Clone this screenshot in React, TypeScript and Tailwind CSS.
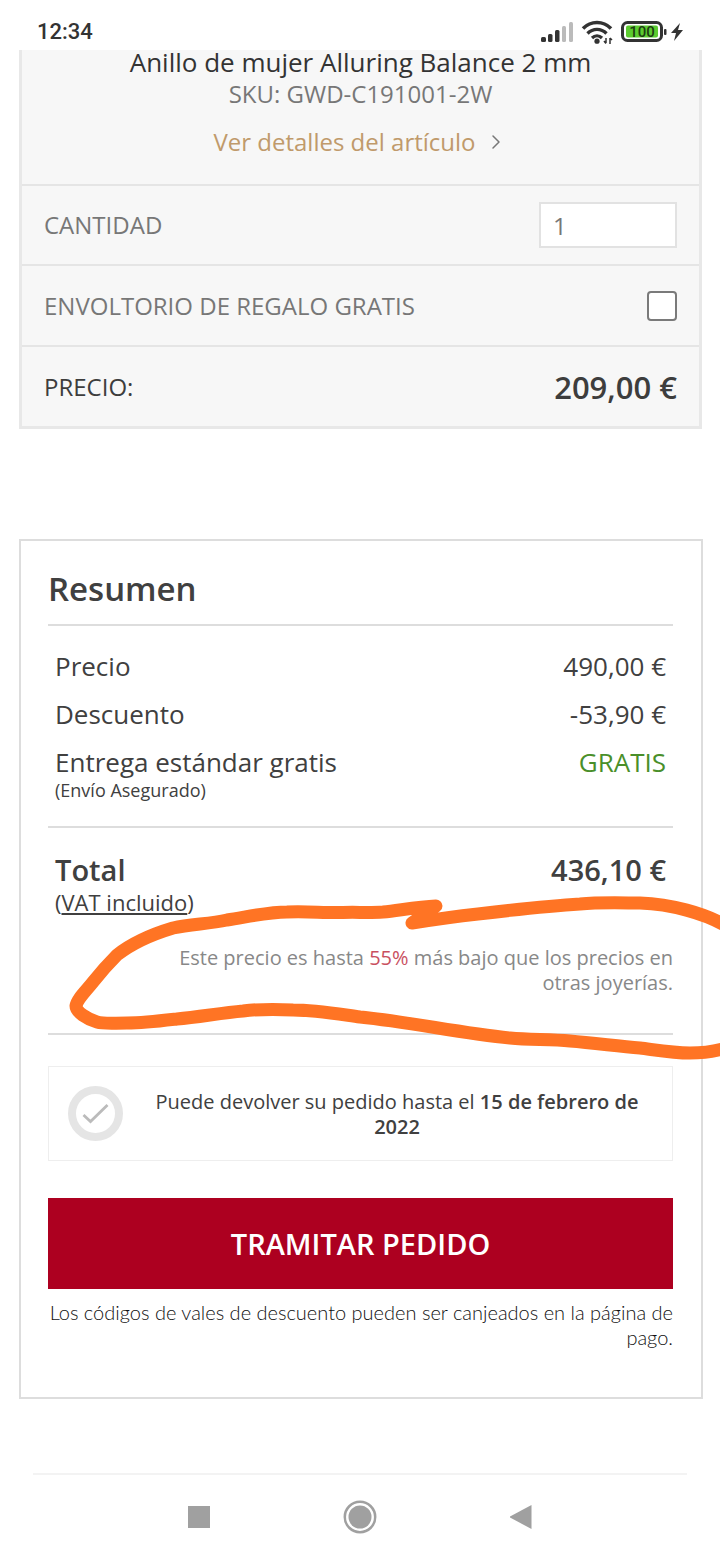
import { ChevronRight } from "lucide-react";

function StatusBar() {
  return (
    <header className="flex h-[50px] items-center justify-between pt-[14px] pr-[37px] pl-[37px] font-['Roboto',sans-serif] text-[#333]">
      <span className="text-[22px] leading-7 font-medium">12:34</span>
      <div className="flex items-center gap-2">
        {/* Signal */}
        <svg className="h-5 w-8" viewBox="0 0 32 20" aria-hidden="true">
          <rect x="0" y="15" width="5" height="5" rx="1.500" fill="#333" />
          <rect x="7" y="12" width="4.500" height="8" rx="1.500" fill="#333" />
          <rect x="14" y="8" width="4.500" height="12" rx="1.500" fill="#333" />
          <rect x="21" y="4" width="4" height="16" rx="1.500" fill="#bbb" />
          <rect x="28" y="0" width="4" height="20" rx="1.500" fill="#bbb" />
        </svg>
        {/* Wi-Fi */}
        <svg className="h-6 w-8" viewBox="0 0 32 24" fill="none" aria-hidden="true">
          <path d="M2 8.500C10 .5 22 .5 30 8.500" stroke="#333" strokeWidth="3.600" />
          <path d="M6.500 13.500C12 8 20 8 25.500 13.500" stroke="#333" strokeWidth="3.400" />
          <path d="M11 18c3-3 7-3 10 0" stroke="#333" strokeWidth="3.200" />
          <circle cx="16" cy="21.200" r="2.600" fill="#333" />
          <path d="M25 18v5m-2-2 2 2.500M29 24v-6m2 2-2-2" stroke="#333" strokeWidth="1.500" />
        </svg>
        {/* Battery */}
        <svg className="h-[22px] w-[46px]" viewBox="0 0 46 22" aria-hidden="true">
          <rect x="1.500" y="1.500" width="39" height="18" rx="5" fill="#fff" stroke="#333" strokeWidth="3" />
          <rect x="5" y="4.500" width="32" height="12" rx="2" fill="#5ccb2f" />
          <rect x="43" y="8" width="2.500" height="6" rx="1" fill="#333" />
          <text x="21" y="16" textAnchor="middle" fontSize="15" fontWeight="500" fill="#1d3d12">
            100
          </text>
        </svg>
        <svg className="-ml-1 h-5 w-3" viewBox="0 0 12 20" fill="#333" aria-hidden="true">
          <path d="M9 1 0 11h5L3 19l9-11H7z" />
        </svg>
      </div>
    </header>
  );
}

function ProductCard() {
  return (
    <section className="mr-[18px] ml-[19px] border-x-[3px] border-b-[3px] border-[#e8e8e8] bg-[#f7f7f7] text-2xl">
      <div className="flex flex-col items-center pb-[26px]">
        <h2 className="text-[26px] leading-6 text-[#333]">Anillo de mujer Alluring Balance 2 mm</h2>
        <p className="mt-1 leading-8 text-[#777]">SKU: GWD-C191001-2W</p>
        <a href="#detalles" className="mt-4 flex items-center gap-2 leading-8 text-[#c09a6b]">
          Ver detalles del artículo
          <ChevronRight className="size-6 text-[#777]" strokeWidth={1.5} />
        </a>
      </div>

      <div className="flex h-20 items-center justify-between border-t-2 border-[#e5e5e5] px-[22px] text-[#777]">
        <label htmlFor="cantidad">CANTIDAD</label>
        <input
          id="cantidad"
          type="text"
          defaultValue="1"
          className="h-[46px] w-[138px] border-2 border-[#e2e2e2] bg-white px-3"
        />
      </div>

      <div className="flex h-[81px] items-center justify-between border-t-2 border-[#e5e5e5] px-[22px] text-[#777]">
        <label htmlFor="envoltorio">ENVOLTORIO DE REGALO GRATIS</label>
        <input
          id="envoltorio"
          type="checkbox"
          className="size-[30px] appearance-none rounded border-2 border-[#7a7a7a] bg-white checked:bg-[#7a7a7a]"
        />
      </div>

      <div className="flex h-[81px] items-center justify-between border-t-2 border-[#e5e5e5] px-[22px] text-[#3d3d3d]">
        <span>PRECIO:</span>
        <span className="text-[31px] leading-10 font-semibold">209,00 €</span>
      </div>
    </section>
  );
}

function Summary() {
  return (
    <section className="relative mt-[110px] overflow-hidden pr-[17px] pl-[19px]">
      <div className="border-2 border-[#ddd] pt-7 pr-7 pb-[47px] pl-[27px] text-[#404040]">
        <h2 className="border-b-2 border-[#ddd] pb-[15px] text-[33px] leading-10 font-semibold">
          Resumen
        </h2>

        <dl className="flex flex-col gap-4 border-b-2 border-[#ddd] px-[7px] py-6 text-[26px] leading-8">
          <div className="flex justify-between">
            <dt>Precio</dt>
            <dd>490,00 €</dd>
          </div>
          <div className="flex justify-between">
            <dt>Descuento</dt>
            <dd>-53,90 €</dd>
          </div>
          <div className="flex justify-between">
            <dt>
              Entrega estándar gratis
              <small className="block text-lg leading-6">(Envío Asegurado)</small>
            </dt>
            <dd className="text-[#4a8f2a]">GRATIS</dd>
          </div>
        </dl>

        <div className="border-b-2 border-[#ddd] pt-[26px] pb-[38px]">
          <div className="flex justify-between px-[7px] text-[29px] leading-8 font-semibold">
            <span>Total</span>
            <span>436,10 €</span>
          </div>
          <p className="px-[7px] text-[22px] leading-8">
            (<span className="underline underline-offset-2">VAT incluido</span>)
          </p>
          <p className="mt-[27px] pl-[120px] text-right text-xl leading-[25px] text-[#888]">
            Este precio es hasta <span className="text-[#c9505f]">55%</span> más bajo que los precios en
            otras joyerías.
          </p>
        </div>

        <div className="mt-[31px] flex h-[95px] items-center gap-[18px] border border-[#eee] px-[19px]">
          <svg className="size-[55px] shrink-0" viewBox="0 0 55 55" fill="none" aria-hidden="true">
            <circle cx="27.500" cy="27.500" r="23.500" stroke="#e5e5e5" strokeWidth="8" />
            <path d="m15.500 29 7 6.500L39.500 19" stroke="#bbb" strokeWidth="2.800" />
          </svg>
          <p className="flex-1 text-center text-xl leading-[25px]">
            Puede devolver su pedido hasta el <b className="font-semibold">15 de febrero de 2022</b>
          </p>
        </div>

        <button
          type="button"
          className="mt-[37px] h-[91px] w-full bg-[#ad0020] text-[29px] font-semibold text-white hover:bg-[#96001c]"
        >
          TRAMITAR PEDIDO
        </button>
        <p className="mt-[11px] text-right font-['Lato',sans-serif] text-xl leading-[25px] font-light text-[#111]">
          Los códigos de vales de descuento pueden ser canjeados en la página de pago.
        </p>
      </div>

      {/* Hand-drawn marker loop over the price note */}
      <svg
        className="pointer-events-none absolute top-[351px] left-0 w-full"
        viewBox="0 0 720 175"
        fill="none"
        stroke="#ff7424"
        strokeWidth="13"
        strokeLinecap="round"
        strokeLinejoin="round"
        aria-hidden="true"
      >
        <path d="M726 158C716 161 705 163 690 163C673 163 656 160 640 158C617 156 594 153 570 151C550 149 530 150 510 148C460 143 410 132 360 127C338 124 315 120 293 120C276 119 260 119 243 121C221 123 199 127 177 129C160 131 144 133 127 133C112 133 104 134 97 132C87 129 76 122 76 116C77 109 86 101 93 92C101 82 108 74 117 65C131 54 153 44 173 38C191 34 209 34 227 30C247 27 267 22 287 22C306 21 324 23 343 22.500C356 22 370 23 383 22C401 20 418 17 436 16L412 33C431 30 460 26 478 24C512 20 546 16 580 14C600 12 625 13 640 13C670 14 705 23 728 37" />
      </svg>
    </section>
  );
}

function NavBar() {
  return (
    <nav className="mx-[33px] mt-[74px] border-t-2 border-[#f3f3f3]">
      <div className="mx-auto grid h-[84px] max-w-[484px] grid-cols-3 place-items-center text-[#a0a0a0]">
        <button type="button" aria-label="Recientes">
          <svg className="size-[22px]" viewBox="0 0 22 22" fill="currentColor">
            <rect width="22" height="22" />
          </svg>
        </button>
        <button type="button" aria-label="Inicio">
          <svg className="size-[34px]" viewBox="0 0 34 34">
            <circle cx="17" cy="17" r="15.200" fill="none" stroke="currentColor" strokeWidth="2.500" />
            <circle cx="17" cy="17" r="11.500" fill="currentColor" />
          </svg>
        </button>
        <button type="button" aria-label="Atrás">
          <svg className="h-6 w-[22px]" viewBox="0 0 22 24" fill="currentColor">
            <path d="M21.500 0v24L0 12.500v-1z" />
          </svg>
        </button>
      </div>
    </nav>
  );
}

export default function App() {
  return (
    <div className="min-h-screen bg-white font-['Open_Sans',sans-serif]">
      <StatusBar />
      <main>
        <ProductCard />
        <Summary />
      </main>
      <NavBar />
    </div>
  );
}
